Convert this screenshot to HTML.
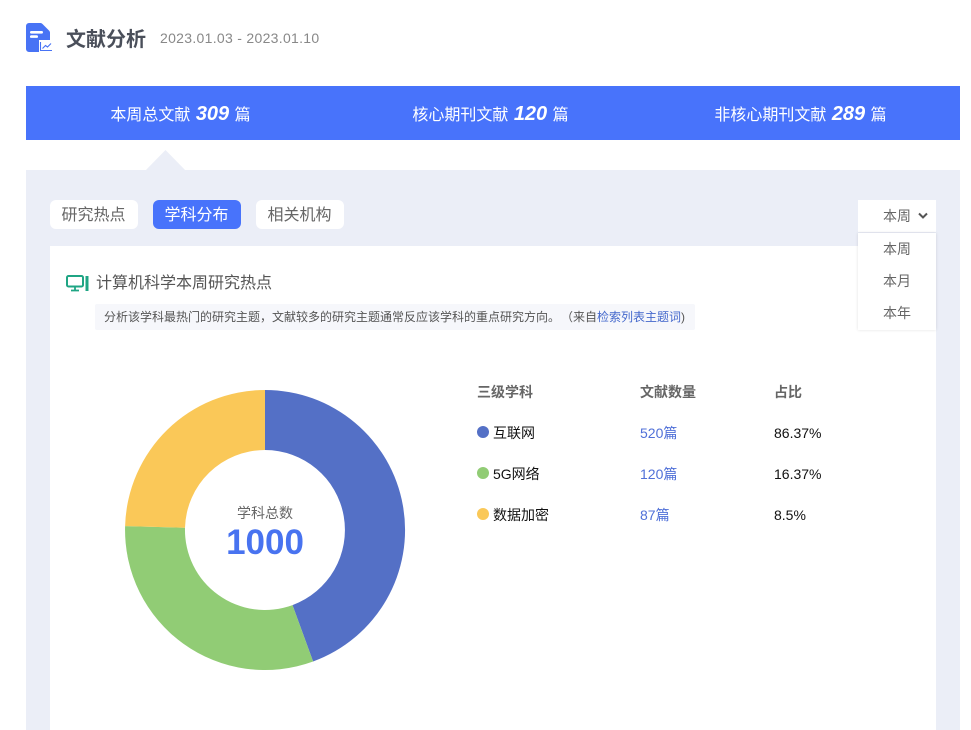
<!DOCTYPE html>
<html lang="zh"><head><meta charset="utf-8">
<style>
*{margin:0;padding:0;box-sizing:border-box}
html,body{width:971px;height:730px;overflow:hidden;background:#fff}
body{font-family:"Liberation Sans","Noto Sans CJK SC",sans-serif;position:relative;color:#555}
.a{position:absolute;white-space:nowrap}
.tab{position:absolute;top:200px;width:88px;height:29px;border-radius:6px;background:#fff;font-size:16px;line-height:31px;text-align:center;color:#666;padding-right:1px}
.st{position:absolute;top:86px;height:54px;line-height:56px;color:#fff;font-size:16px;text-align:center;white-space:nowrap}
.st i{font-weight:bold;font-size:20px;margin:0 1px}
.th{font-size:14px;font-weight:bold;color:#666;line-height:20px}
.td{font-size:14px;line-height:20px;color:#111}
.bl{color:#5070d8}
.dot{position:absolute;left:477px;width:12px;height:12px;border-radius:50%}
.m{font-size:14px;color:#666;left:883px;line-height:20px}
</style></head><body>
<svg class="a" style="left:26px;top:23px" width="27" height="30" viewBox="0 0 27 30">
<path d="M3 0H14.500Q15.500 0 16.500 1L23 7.500Q24 8.500 24 9.500V17H13V29H3A3 3 0 0 1 0 26V3A3 3 0 0 1 3 0Z" fill="#4873f5"/>
<rect x="4" y="8" width="13" height="2.600" rx="1.300" fill="#fff"/><rect x="4" y="12.300" width="8" height="2.600" rx="1.300" fill="#fff"/>
<path d="M14.500 19V27.500H26" fill="none" stroke="#4873f5" stroke-width="1.100"/>
<path d="M16.500 25.500L19.500 22.500L21.500 24L25 20.500" fill="none" stroke="#4873f5" stroke-width="1.100"/>
</svg>
<div class="a" style="left:66px;top:26px;font-size:20px;font-weight:bold;line-height:28px;color:#4a4f5a">文献分析</div>
<div class="a" style="left:160px;top:28px;font-size:14px;line-height:20px;color:#888;letter-spacing:.3px">2023.01.03 - 2023.01.10</div>

<div class="a" style="left:26px;top:86px;width:934px;height:54px;background:#4873fb"></div>
<div class="st" style="left:26px;width:309px">本周总文献 <i>309</i> 篇</div>
<div class="st" style="left:335px;width:311px">核心期刊文献 <i>120</i> 篇</div>
<div class="st" style="left:646px;width:309px">非核心期刊文献 <i>289</i> 篇</div>

<div class="a" style="left:26px;top:170px;width:934px;height:560px;background:#ebeef7"></div>
<svg class="a" style="left:145px;top:150px" width="41" height="21"><path d="M0 21L20.500 0L41 21Z" fill="#ebeef7"/></svg>

<div class="tab" style="left:50px">研究热点</div>
<div class="tab" style="left:153px;background:#4873fb;color:#fff">学科分布</div>
<div class="tab" style="left:256px">相关机构</div>

<div class="a" style="left:50px;top:246px;width:886px;height:484px;background:#fff"></div>

<div class="a" style="left:858px;top:200px;width:78px;height:32px;background:#fff"></div>
<div class="a m" style="top:206px">本周</div>
<svg class="a" style="left:918px;top:212px" width="10" height="8"><path d="M1 1.500L5 5.500L9 1.500" fill="none" stroke="#555" stroke-width="2"/></svg>
<div class="a" style="left:858px;top:233px;width:78px;height:97px;background:#fff;box-shadow:0 0 3px rgba(0,0,0,.12)"></div>
<div class="a m" style="top:239px">本周</div>
<div class="a m" style="top:271px">本月</div>
<div class="a m" style="top:303px">本年</div>

<svg class="a" style="left:66px;top:275px" width="23" height="17" viewBox="0 0 23 17">
<rect x="1" y="1" width="16" height="10.500" rx="1.500" fill="none" stroke="#1fa584" stroke-width="2"/>
<path d="M9 12V15M5 15.500H13" stroke="#1fa584" stroke-width="1.800" fill="none"/>
<rect x="19.500" y="1" width="3" height="15" fill="#1fa584"/>
</svg>
<div class="a" style="left:96px;top:273px;font-size:16px;line-height:22px;color:#555">计算机科学本周研究热点</div>
<div class="a" style="left:95px;top:304px;width:600px;height:26px;background:#f6f7fb;border-radius:2px"></div>
<div class="a" style="left:104px;top:308px;font-size:12px;line-height:18px;color:#555">分析该学科最热门的研究主题，文献较多的研究主题通常反应该学科的重点研究方向。<span style="margin-left:7px">（来自</span><span style="color:#4468cc">检索列表主题词</span>)</div>

<svg class="a" style="left:0;top:0" width="971" height="730">
<path d="M265 390A140 140 0 0 1 313.100 661.500L292.500 605.100A80 80 0 0 0 265 450Z" fill="#5470c6"/>
<path d="M313.100 661.500A140 140 0 0 1 125.100 526.100L185 527.800A80 80 0 0 0 292.500 605.100Z" fill="#91cc75"/>
<path d="M125.100 526.100A140 140 0 0 1 265 390L265 450A80 80 0 0 0 185 527.800Z" fill="#fac858"/>
</svg>
<div class="a" style="left:185px;width:160px;top:504px;text-align:center;font-size:14px;line-height:18px;color:#666">学科总数</div>
<div class="a" style="left:185px;width:160px;top:522px;text-align:center;font-size:35px;font-weight:bold;line-height:42px;color:#4873f0">1000</div>

<div class="a th" style="left:477px;top:382px">三级学科</div>
<div class="a th" style="left:640px;top:382px">文献数量</div>
<div class="a th" style="left:774px;top:382px">占比</div>

<div class="dot" style="top:426px;background:#5470c6"></div>
<div class="a td" style="left:493px;top:423px">互联网</div>
<div class="a td bl" style="left:640px;top:423px">520篇</div>
<div class="a td" style="left:774px;top:423px">86.37%</div>

<div class="dot" style="top:467px;background:#91cc75"></div>
<div class="a td" style="left:493px;top:464px">5G网络</div>
<div class="a td bl" style="left:640px;top:464px">120篇</div>
<div class="a td" style="left:774px;top:464px">16.37%</div>

<div class="dot" style="top:508px;background:#fac858"></div>
<div class="a td" style="left:493px;top:505px">数据加密</div>
<div class="a td bl" style="left:640px;top:505px">87篇</div>
<div class="a td" style="left:774px;top:505px">8.5%</div>
</body></html>
